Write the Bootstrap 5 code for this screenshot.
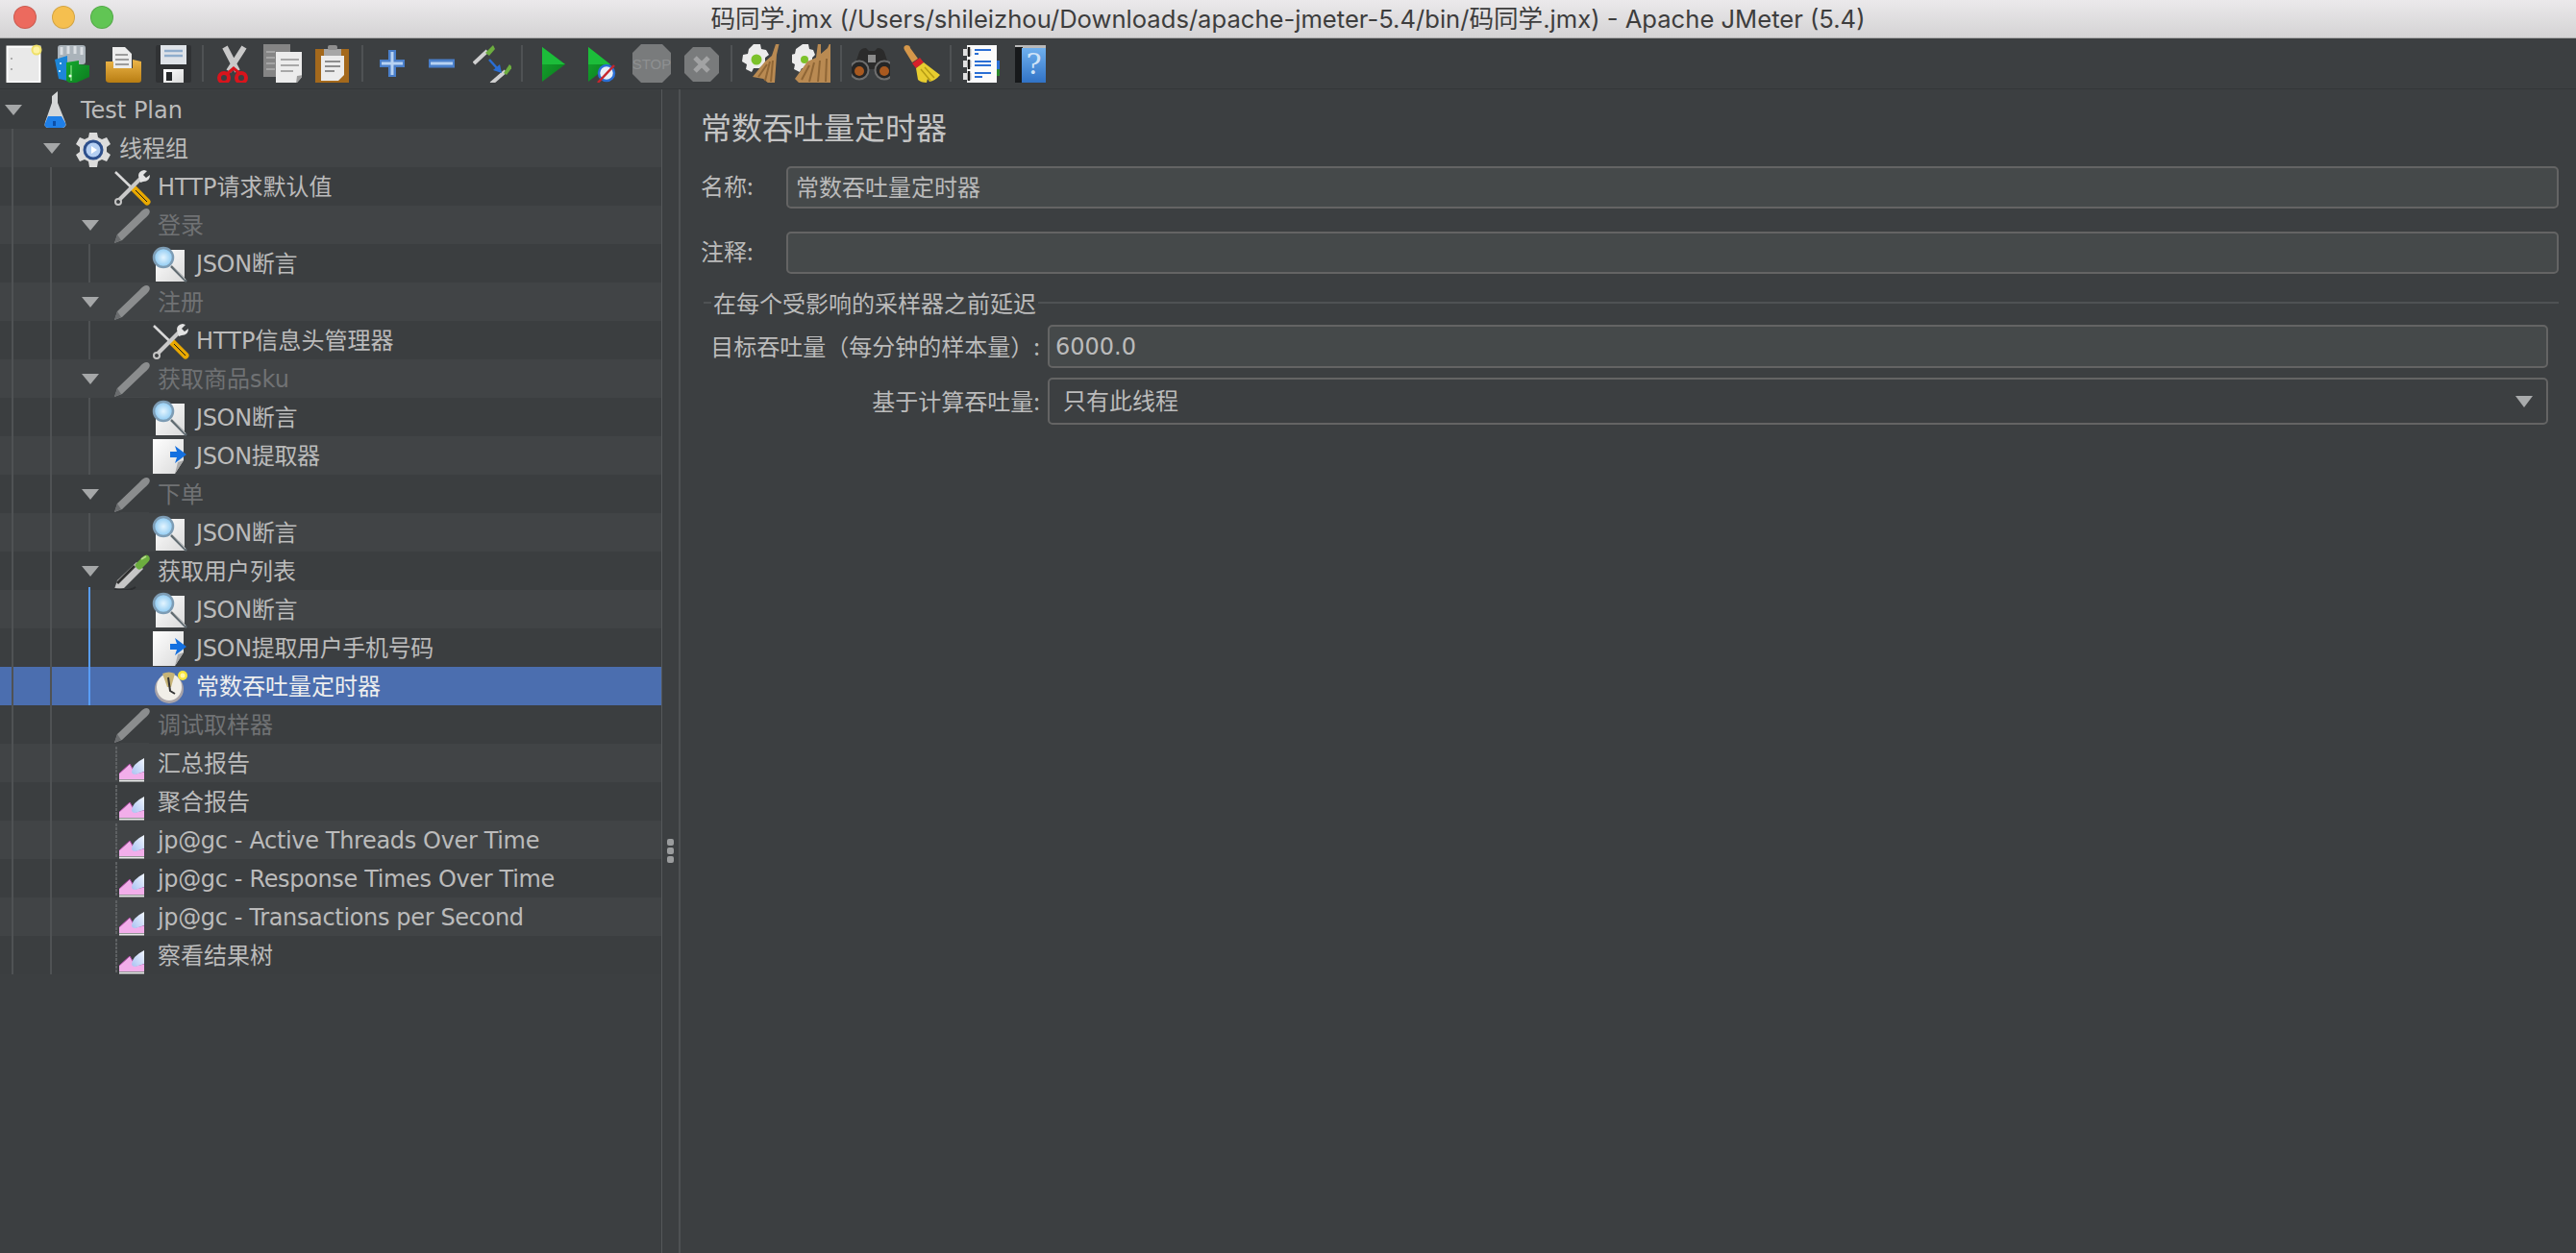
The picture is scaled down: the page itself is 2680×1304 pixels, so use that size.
<!DOCTYPE html>
<html lang="zh-CN">
<head>
    <meta charset="UTF-8">
    <title>码同学.jmx - Apache JMeter (5.4)</title>
    <link rel="stylesheet" href="https://cdn.jsdelivr.net/npm/bootstrap@5.3.0/dist/css/bootstrap.min.css">
    <style>
        html, body { height: 100%; }
        body { background: #3c3f41; color: #bbb; overflow: hidden; font: 24px/1.2 "DejaVu Sans", "Noto Sans CJK SC", sans-serif; }
        .app-shell { height: 1304px; }

        .title-bar { height: 40px; flex: none; background: linear-gradient(#ebe9eb, #d4d3d4); border-bottom: 1px solid #a9a9a9; }
        .title-text { font: 25.6px/38px Inter, "Noto Sans CJK SC", sans-serif; color: #3d3d3d; white-space: nowrap; }
        .light { width: 24px; height: 24px; border-radius: 50%; border: 1px solid rgba(0,0,0,.14); }
        .light-red { background: #ec6a5e; }
        .light-amber { background: #f5bf4f; }
        .light-green { background: #61c554; }
        .lights { left: 14px; top: 6px; gap: 16px; }

        .tool-bar { height: 53px; flex: none; background: #3c3f41; border-bottom: 1px solid #333638; }
        .tool-slot { width: 52px; height: 52px; flex: none; }
        .tool-slot-first { width: 50px; }
        .tool-slot svg { width: 40px; height: 40px; overflow: visible; }
        .tool-sep { width: 10px; flex: none; }
        .tool-sep::after { content: ""; width: 2px; height: 38px; background: #4f5254; }

        .tree-pane { width: 689px; flex: none; padding-top: 1px; border-right: 1px solid #55585a; }
        .split-bar { width: 19px; flex: none; border-right: 2px solid #4e5153; }
        .split-dot { width: 7px; height: 7px; border-radius: 2px; background: #9a9c9d; }
        .split-dots { gap: 2px; margin-top: 780px; }

        .tree-row { height: 40px; background: #3b3e40; white-space: nowrap; }
        .tree-row:nth-child(even) { background: #414446; }
        .tree-row.is-selected { background: #4b6eaf; color: #eee; }
        .tree-row.is-off { color: #707274; }
        .row-text { padding-top: 2px; }
        .latin-tight { letter-spacing: -.35px; }
        .lv1 { padding-left: 40px; }
        .lv2 { padding-left: 80px; }
        .lv3 { padding-left: 120px; }
        .arrow-slot { width: 37px; flex: none; }
        .arrow-down { width: 0; height: 0; margin-left: 5px; border-left: 9px solid transparent; border-right: 9px solid transparent; border-top: 11px solid #a5a7a8; }
        .row-icon { width: 40px; height: 40px; flex: none; margin-right: 7px; overflow: visible; }

        .guide { position: absolute; width: 2px; background: #4f5254; }
        .guide-root { left: 12px; top: 41px; height: 880px; }
        .guide-group { left: 52px; top: 81px; height: 840px; }
        .guide-a { left: 92px; top: 161px; height: 40px; }
        .guide-b { left: 92px; top: 241px; height: 40px; }
        .guide-c { left: 92px; top: 321px; height: 80px; }
        .guide-d { left: 92px; top: 441px; height: 40px; }
        .guide-e { left: 92px; top: 518px; height: 123px; background: #589df6; }

        .detail-pane { padding: 18px 18px 0 21px; }
        .detail-head { font-size: 32px; line-height: 40px; font-family: "Noto Sans CJK SC", sans-serif; color: #c4c4c4; }
        .name-label { width: 89px; flex: none; padding-bottom: 3px; font-family: "Noto Sans CJK SC", sans-serif; }
        .field { height: 44px; padding: 0 8px 3px; font-size: 24px; color: #bbb; background: #45494a; border: 2px solid #646464; border-radius: 5px; font-family: "Noto Sans CJK SC", sans-serif; }
        .field:focus { color: #bbb; background: #45494a; border-color: #646464; box-shadow: none; }
        .field-tall { height: 45px; padding: 0 6px 0 6px; font-family: "DejaVu Sans", sans-serif; }
        .pick { height: 49px; padding: 0 40px 3px 14px; font-size: 24px; color: #bbb; border: 2px solid #646464; border-radius: 5px; font-family: "Noto Sans CJK SC", sans-serif;
            background-color: #3c3f41; background-size: 18px 12px; background-position: right 14px center;
            background-image: url("data:image/svg+xml,%3Csvg xmlns='http://www.w3.org/2000/svg' viewBox='0 0 18 12'%3E%3Cpath d='M0 0h18L9 12z' fill='%23a9abac'/%3E%3C/svg%3E"); }
        .pick:focus { color: #bbb; border-color: #646464; box-shadow: none; }
        .row-one { margin-top: 22px; }
        .row-two { margin-top: 24px; }
        .group-title { height: 30px; margin: 15px 0 0 3px; font-family: "Noto Sans CJK SC", sans-serif; }
        .rule-short { width: 8px; height: 2px; background: #4f5254; margin-right: 2px; }
        .rule-long { height: 2px; background: #4f5254; margin-left: 2px; }
        .group-body { margin: 8px 11px 0 0; }
        .pick-row { margin-top: 10px; }
        .wide-label { width: 361px; flex: none; padding-right: 8px; text-align: right; white-space: nowrap; font-family: "Noto Sans CJK SC", sans-serif; }
    </style>
</head>
<body>
<svg width="0" height="0" class="position-absolute">
    <defs>
        <linearGradient id="paper" x1="0" y1="0" x2="1" y2="1"><stop offset="0" stop-color="#fff"/><stop offset="1" stop-color="#d9d9d9"/></linearGradient>
        <linearGradient id="amber" x1="0" y1="0" x2="0" y2="1"><stop offset="0" stop-color="#edb64a"/><stop offset="1" stop-color="#b87d12"/></linearGradient>
        <linearGradient id="leaf" x1="0" y1="0" x2="1" y2="1"><stop offset="0" stop-color="#14a82e"/><stop offset="1" stop-color="#0c7a1e"/></linearGradient>
        <linearGradient id="sky" x1="0" y1="0" x2="0" y2="1"><stop offset="0" stop-color="#6fb0ee"/><stop offset="1" stop-color="#2d6fc4"/></linearGradient>
        <linearGradient id="ice" x1="1" y1="0" x2="0" y2="1"><stop offset="0" stop-color="#f2f6ff"/><stop offset="1" stop-color="#a9c2f2"/></linearGradient>
        <radialGradient id="lens"><stop offset="0" stop-color="#e4f5ff"/><stop offset="1" stop-color="#8cc9f2"/></radialGradient>

        <symbol id="i-flask" viewBox="0 0 40 40"><path d="M17 6l6-5v12l8 20q2 6-4 6H14q-6 0-4-6l7-20z" fill="#d5d7d8"/><path d="M13 27h14l4 7q1 5-4 5H14q-6 0-4-5z" fill="#1f7fe8"/><path d="M18 32h3v5h-3z" fill="#0c4fa8"/></symbol>
        <symbol id="i-gear" viewBox="0 0 40 40"><path d="M16 4h8l1 5 4 2 5-2 4 7-4 3v5l4 3-4 7-5-2-4 2-1 6h-8l-1-6-4-2-5 2-4-7 4-3v-5l-4-3 4-7 5 2 4-2z" fill="#dcdcdc"/><circle cx="20" cy="22" r="10.5" fill="#2d4f8c"/><circle cx="20" cy="22" r="7.5" fill="#b5cff2"/><path d="M18 18l6 4-6 4z" fill="#fff"/></symbol>
        <symbol id="i-tools" viewBox="0 0 40 40"><path d="M3 5l30 29" stroke="#d9d9d9" stroke-width="2.5"/><path d="M22 22l14 14" stroke="#e8a800" stroke-width="7" stroke-linecap="round"/><path d="M24 24l12 12" stroke="#1b1b1b" stroke-width="1"/><path d="M32 9L7 34" stroke="#c9c9c9" stroke-width="4"/><circle cx="6" cy="36" r="3" fill="none" stroke="#c4c4c4" stroke-width="2"/><path d="M27 9q0-5 6-6l3 1-4 4 3 3 4-3q0 7-7 7l-3 1z" fill="#e3e3e3"/></symbol>
        <symbol id="i-pipe-off" viewBox="0 0 40 40"><path d="M2 39l3-9L28 8q6-7 10-4 3 4-5 10L10 36z" fill="#8b8d8e"/><path d="M2 39l7-3-4-6z" fill="#6a6c6e"/><path d="M8 40h30" stroke="#484b4d" stroke-width="1"/></symbol>
        <symbol id="i-pipe-on" viewBox="0 0 40 40"><path d="M2 39l3-9 20-19 7 7-20 20z" fill="#c6c6c6"/><path d="M5 33L23 15" stroke="#2f2f2f" stroke-width="3"/><path d="M25 17q-3-3 0-5l7-7q4-3 6 0 2 3-1 6l-7 7q-3 2-5-1z" fill="#6cad3f"/><path d="M30 8l5-3" stroke="#b5dd8a" stroke-width="2"/><path d="M2 39q15 3 22-2" stroke="#2b2d2f" stroke-width="2" fill="none"/></symbol>
        <symbol id="i-lens" viewBox="0 0 40 40"><rect x="5" y="6" width="30" height="33" fill="url(#paper)"/><path d="M21 23l16 16" stroke="#5f6a70" stroke-width="2.5"/><path d="M22 22l14 15" stroke="#c9c9c9" stroke-width="1"/><circle cx="13" cy="14" r="10" fill="url(#lens)" stroke="#7d9cb4" stroke-width="2.5"/></symbol>
        <symbol id="i-extract" viewBox="0 0 40 40"><path d="M2 3h32v22l-9 14H2z" fill="url(#paper)"/><path d="M25 39l3-12 6-2z" fill="#a9a9a9"/><path d="M20 16h7l-2-6 12 9-12 9 2-6h-7z" fill="#1470e0"/></symbol>
        <symbol id="i-timer" viewBox="0 0 40 40"><ellipse cx="19" cy="23" rx="15" ry="15" fill="#a9a4a8"/><ellipse cx="19" cy="21" rx="13" ry="14" fill="#f1efe8"/><path d="M12 7q7-3 13 0l-4 14h-4z" fill="#c7b476"/><path d="M18 11l2 14 5 3" stroke="#333" stroke-width="2" fill="none"/><circle cx="33" cy="9" r="5" fill="#f5e33c"/><circle cx="33" cy="9" r="2.5" fill="#fff7a8"/></symbol>
        <symbol id="i-chart" viewBox="0 0 40 40"><path d="M4 3v36" stroke="#5d6062" stroke-width="2" stroke-dasharray="3 1"/><path d="M7 37v-6l11-10 6 10 9-2v8z" fill="#f2aeea"/><path d="M7 31l11-10 6 10 9-2" stroke="#b04ca8" stroke-width="1" fill="none"/><path d="M33 15q-12 6-13 14 0 3 4 3l9-3z" fill="url(#ice)"/><path d="M7 38.500h26" stroke="#e9e9e9" stroke-width="2"/></symbol>

        <symbol id="t-new" viewBox="0 0 40 40"><rect x="2.500" y="2.500" width="34" height="37" fill="#e9e9e9" stroke="#fff" stroke-width="2"/><circle cx="33" cy="6" r="4.500" fill="#fdf3a3" stroke="#efe06a" stroke-width="2"/><circle cx="7" cy="15" r="1" fill="#999"/><circle cx="7" cy="26" r="1" fill="#999"/></symbol>
        <symbol id="t-template" viewBox="0 0 40 40"><rect x="4" y="1" width="29" height="20" rx="3" fill="#aab3ba"/><path d="M8 3v8M15 2v8M22 2v8M29 3v8" stroke="#d9dee2" stroke-width="3"/><path d="M1 16l13-4v26L5 36z" fill="#1d86d8"/><path d="M6 20l2 0M5 28l2 0" stroke="#bfe4ff" stroke-width="2"/><path d="M13 19l13-2v4l11 1v12L19 42l-6-4z" fill="url(#leaf)"/><path d="M18 22v16" stroke="#58c85f" stroke-width="2"/><circle cx="17" cy="33" r="1.500" fill="#e6ffe6"/></symbol>
        <symbol id="t-open" viewBox="0 0 40 40"><path d="M9 3h13l7 7v16H9z" fill="#ececec"/><path d="M12 11h13M12 16h14M12 21h14" stroke="#9c9c9c" stroke-width="2"/><path d="M2 18h8v7h20v-9l9 2v19q0 3-3 3H6q-4 0-4-3z" fill="url(#amber)"/></symbol>
        <symbol id="t-save" viewBox="0 0 40 40"><path d="M3 1h34q2 0 2 2v35q0 2-2 2H4q-2 0-2-2V3z" fill="#303234"/><rect x="7" y="1" width="27" height="20" fill="#dfe3e8"/><path d="M11 7h19M11 12h19" stroke="#8fadcc" stroke-width="2.500"/><rect x="10" y="26" width="21" height="14" fill="url(#paper)"/><rect x="13" y="29" width="6" height="9" fill="#26282a"/></symbol>
        <symbol id="t-cut" viewBox="0 0 40 40"><path d="M12 3l13 25M32 3L16 28" stroke="#c9c9c9" stroke-width="6"/><circle cx="11" cy="35" r="5" fill="none" stroke="#d8141c" stroke-width="4"/><circle cx="29" cy="35" r="5" fill="none" stroke="#d8141c" stroke-width="4"/><path d="M14 31l7-6 7 6" stroke="#d8141c" stroke-width="3" fill="none"/></symbol>
        <symbol id="t-copy" viewBox="0 0 40 40"><rect x="-1" y="0" width="29" height="34" fill="#858585"/><path d="M3 8h9M3 14h9M3 20h9M3 26h9" stroke="#a5a5a5" stroke-width="2"/><path d="M13 8h29v24l-8 9H13z" fill="#ececec"/><path d="M18 16h19M18 22h19M18 28h13" stroke="#a8a8a8" stroke-width="2"/><path d="M34 41l1-8 7-1z" fill="#9c9c9c"/></symbol>
        <symbol id="t-paste" viewBox="0 0 40 40"><rect x="2" y="5" width="35" height="36" fill="#a4691c"/><path d="M8 12h24v20l-6 6H8z" fill="#ececec"/><path d="M12 18h16M12 23h16M12 28h10" stroke="#8d8d8d" stroke-width="2"/><rect x="11" y="5" width="18" height="7" fill="#a7a7a7"/><rect x="15" y="1" width="10" height="5" rx="2" fill="#8f8f8f"/></symbol>
        <symbol id="t-plus" viewBox="0 0 40 40"><path d="M20 6v28M7 20h26" stroke="#4a7fca" stroke-width="8"/><path d="M20 8v24M9 20h22" stroke="#b7d2f2" stroke-width="3"/></symbol>
        <symbol id="t-minus" viewBox="0 0 40 40"><path d="M6 20h27" stroke="#4a7fca" stroke-width="9"/><path d="M8 20h23" stroke="#b7d2f2" stroke-width="3"/></symbol>
        <symbol id="t-toggle" viewBox="0 0 40 40"><path d="M1 20L15 7" stroke="#d0d0d0" stroke-width="4"/><path d="M13 9l8-8 2 4-6 7z" fill="#6cad3f"/><path d="M19 41l15-13" stroke="#d0d0d0" stroke-width="4"/><path d="M32 30l6-9 3 3-6 8z" fill="#6cad3f"/><path d="M17 16l9 10" stroke="#2a6ed4" stroke-width="2.500"/><path d="M30 30l-9-3 7-6z" fill="#2a6ed4"/></symbol>
        <symbol id="t-play" viewBox="0 0 40 40"><path d="M10 3l24 18-24 18z" fill="url(#leaf)"/><path d="M10 3l24 18H10z" fill="#1cbd3a"/></symbol>
        <symbol id="t-play-no" viewBox="0 0 40 40"><path d="M6 3l23 18L6 39z" fill="url(#leaf)"/><path d="M6 3l23 18H6z" fill="#1cbd3a"/><circle cx="25" cy="30" r="8" fill="#e8eef8" stroke="#2a6ed4" stroke-width="2.500"/><path d="M16 40l17-18" stroke="#c6262e" stroke-width="2.500"/></symbol>
        <symbol id="t-stop" viewBox="0 0 40 40"><path d="M11-2h18l13 13v18L29 42H11L-2 29V11z" fill="#797b7c"/><text x="20" y="26" text-anchor="middle" font-family="Liberation Sans, sans-serif" font-size="15" fill="#8e9091">STOP</text></symbol>
        <symbol id="t-halt" viewBox="0 0 40 40"><path d="M11 3h18l9 9v18l-9 9H11l-9-9V12z" fill="#797b7c"/><path d="M13 14l14 14M27 14L13 28" stroke="#a2a3a4" stroke-width="5"/></symbol>
        <symbol id="t-clear" viewBox="0 0 40 40"><path d="M12 0h7l1 5 5 1 3 5-4 3v6l-6 5h-6l-2 4-6-3 1-5-5-3 1-7 5-1 1-5z" fill="#ececec"/><circle cx="15" cy="16" r="5.500" fill="#7cc22b"/><path d="M11 34l13-16 7-6 5-15 3 1-3 13-2 29-6 1-6-5z" fill="#b98a52"/><path d="M17 34l9-13M24 38l5-20M30 39l2-22" stroke="#8f6636" stroke-width="2"/></symbol>
        <symbol id="t-clear-all" viewBox="0 0 40 40"><path d="M11 0h6l1 5 4 1 2 5-3 3v6l-5 5h-6l-2 4-6-3 1-5-5-3 1-7 4-1 1-5z" fill="#ececec"/><circle cx="13" cy="16" r="4" fill="#7cc22b"/><path d="M3 36l13-18 9-4 2-15 3 1 0 10 7-6 3-7 2 1-2 14 0 28-32 1z" fill="#b98a52"/><path d="M10 37l8-15M18 39l5-20M27 39l2-22M35 39l1-24" stroke="#8f6636" stroke-width="2"/></symbol>
        <symbol id="t-find" viewBox="0 0 40 40"><path d="M8 8q2-4 7-4l3 3h6l3-3q5 0 7 4l6 18H2z" fill="#2b2b2b"/><path d="M17 11h8v8h-8z" fill="#8c8c8c"/><circle cx="8" cy="27" r="9.500" fill="#262626" stroke="#6f6f6f" stroke-width="2"/><circle cx="34" cy="27" r="9.500" fill="#262626" stroke="#6f6f6f" stroke-width="2"/><circle cx="8" cy="28" r="5" fill="#a9591f"/><circle cx="34" cy="28" r="5" fill="#a9591f"/></symbol>
        <symbol id="t-broom" viewBox="0 0 40 40"><path d="M3 6q-2-4 2-5 4 0 4 3l8 11-6 4z" fill="#d5974a"/><path d="M11 20l8-6 4 5-8 6z" fill="#d7202a"/><path d="M15 25l8-6 17 13q-5 6-11 7l-2-3-1 4q-6 0-9-3z" fill="#e8cd2f"/><path d="M20 26l10 12M24 24l10 11" stroke="#b69c15" stroke-width="1.500"/></symbol>
        <symbol id="t-log" viewBox="0 0 40 40"><rect x="35" y="17" width="6" height="9" fill="#2a6ed4"/><rect x="35" y="26" width="6" height="7" fill="#2d8a2d"/><rect x="6" y="1" width="31" height="40" fill="#fbfbfb"/><path d="M14 6h17M14 10h4M14 18h17M14 22h17M14 30h17M14 34h8" stroke="#2a6ed4" stroke-width="2.200"/><path d="M2 5h9v7H2zM2 17h9v7H2zM2 30h9v7H2z" fill="#e1e1e1"/><path d="M8 3v10M8 16v10M8 28v10" stroke="#1b1b1b" stroke-width="2.500"/></symbol>
        <symbol id="t-help" viewBox="0 0 40 40"><rect x="4" y="1" width="32" height="3" fill="#b9b9b9"/><rect x="4" y="3" width="8" height="39" fill="#17191b"/><rect x="11" y="4" width="25" height="38" fill="url(#sky)"/><text x="23.500" y="31" text-anchor="middle" font-family="DejaVu Serif, serif" font-size="30" fill="#cfe3f7">?</text></symbol>
    </defs>
</svg>

<div class="app-shell d-flex flex-column">
    <div class="title-bar d-flex align-items-center justify-content-center position-relative">
        <div class="lights d-flex position-absolute">
            <span class="light light-red"></span>
            <span class="light light-amber"></span>
            <span class="light light-green"></span>
        </div>
        <span class="title-text">码同学.jmx (/Users/shileizhou/Downloads/apache-jmeter-5.4/bin/码同学.jmx) - Apache JMeter (5.4)</span>
    </div>

    <div class="tool-bar d-flex">
        <div class="tool-slot tool-slot-first d-flex align-items-center justify-content-center"><svg><use href="#t-new"/></svg></div>
        <div class="tool-slot d-flex align-items-center justify-content-center"><svg><use href="#t-template"/></svg></div>
        <div class="tool-slot d-flex align-items-center justify-content-center"><svg><use href="#t-open"/></svg></div>
        <div class="tool-slot d-flex align-items-center justify-content-center"><svg><use href="#t-save"/></svg></div>
        <div class="tool-sep d-flex align-items-center justify-content-center"></div>
        <div class="tool-slot d-flex align-items-center justify-content-center"><svg><use href="#t-cut"/></svg></div>
        <div class="tool-slot d-flex align-items-center justify-content-center"><svg><use href="#t-copy"/></svg></div>
        <div class="tool-slot d-flex align-items-center justify-content-center"><svg><use href="#t-paste"/></svg></div>
        <div class="tool-sep d-flex align-items-center justify-content-center"></div>
        <div class="tool-slot d-flex align-items-center justify-content-center"><svg><use href="#t-plus"/></svg></div>
        <div class="tool-slot d-flex align-items-center justify-content-center"><svg><use href="#t-minus"/></svg></div>
        <div class="tool-slot d-flex align-items-center justify-content-center"><svg><use href="#t-toggle"/></svg></div>
        <div class="tool-sep d-flex align-items-center justify-content-center"></div>
        <div class="tool-slot d-flex align-items-center justify-content-center"><svg><use href="#t-play"/></svg></div>
        <div class="tool-slot d-flex align-items-center justify-content-center"><svg><use href="#t-play-no"/></svg></div>
        <div class="tool-slot d-flex align-items-center justify-content-center"><svg><use href="#t-stop"/></svg></div>
        <div class="tool-slot d-flex align-items-center justify-content-center"><svg><use href="#t-halt"/></svg></div>
        <div class="tool-sep d-flex align-items-center justify-content-center"></div>
        <div class="tool-slot d-flex align-items-center justify-content-center"><svg><use href="#t-clear"/></svg></div>
        <div class="tool-slot d-flex align-items-center justify-content-center"><svg><use href="#t-clear-all"/></svg></div>
        <div class="tool-sep d-flex align-items-center justify-content-center"></div>
        <div class="tool-slot d-flex align-items-center justify-content-center"><svg><use href="#t-find"/></svg></div>
        <div class="tool-slot d-flex align-items-center justify-content-center"><svg><use href="#t-broom"/></svg></div>
        <div class="tool-sep d-flex align-items-center justify-content-center"></div>
        <div class="tool-slot d-flex align-items-center justify-content-center"><svg><use href="#t-log"/></svg></div>
        <div class="tool-slot d-flex align-items-center justify-content-center"><svg><use href="#t-help"/></svg></div>
    </div>

    <div class="d-flex flex-grow-1">
        <div class="tree-pane position-relative">
            <ul class="list-unstyled mb-0">
                <li class="tree-row d-flex align-items-center"><span class="arrow-slot"><span class="arrow-down d-block"></span></span><svg class="row-icon"><use href="#i-flask"/></svg><span class="row-text">Test Plan</span></li>
                <li class="tree-row lv1 d-flex align-items-center"><span class="arrow-slot"><span class="arrow-down d-block"></span></span><svg class="row-icon"><use href="#i-gear"/></svg><span class="row-text">线程组</span></li>
                <li class="tree-row lv2 d-flex align-items-center"><span class="arrow-slot"></span><svg class="row-icon"><use href="#i-tools"/></svg><span class="row-text">HTTP请求默认值</span></li>
                <li class="tree-row lv2 is-off d-flex align-items-center"><span class="arrow-slot"><span class="arrow-down d-block"></span></span><svg class="row-icon"><use href="#i-pipe-off"/></svg><span class="row-text">登录</span></li>
                <li class="tree-row lv3 d-flex align-items-center"><span class="arrow-slot"></span><svg class="row-icon"><use href="#i-lens"/></svg><span class="row-text latin-tight">JSON断言</span></li>
                <li class="tree-row lv2 is-off d-flex align-items-center"><span class="arrow-slot"><span class="arrow-down d-block"></span></span><svg class="row-icon"><use href="#i-pipe-off"/></svg><span class="row-text">注册</span></li>
                <li class="tree-row lv3 d-flex align-items-center"><span class="arrow-slot"></span><svg class="row-icon"><use href="#i-tools"/></svg><span class="row-text">HTTP信息头管理器</span></li>
                <li class="tree-row lv2 is-off d-flex align-items-center"><span class="arrow-slot"><span class="arrow-down d-block"></span></span><svg class="row-icon"><use href="#i-pipe-off"/></svg><span class="row-text">获取商品sku</span></li>
                <li class="tree-row lv3 d-flex align-items-center"><span class="arrow-slot"></span><svg class="row-icon"><use href="#i-lens"/></svg><span class="row-text latin-tight">JSON断言</span></li>
                <li class="tree-row lv3 d-flex align-items-center"><span class="arrow-slot"></span><svg class="row-icon"><use href="#i-extract"/></svg><span class="row-text latin-tight">JSON提取器</span></li>
                <li class="tree-row lv2 is-off d-flex align-items-center"><span class="arrow-slot"><span class="arrow-down d-block"></span></span><svg class="row-icon"><use href="#i-pipe-off"/></svg><span class="row-text">下单</span></li>
                <li class="tree-row lv3 d-flex align-items-center"><span class="arrow-slot"></span><svg class="row-icon"><use href="#i-lens"/></svg><span class="row-text latin-tight">JSON断言</span></li>
                <li class="tree-row lv2 d-flex align-items-center"><span class="arrow-slot"><span class="arrow-down d-block"></span></span><svg class="row-icon"><use href="#i-pipe-on"/></svg><span class="row-text">获取用户列表</span></li>
                <li class="tree-row lv3 d-flex align-items-center"><span class="arrow-slot"></span><svg class="row-icon"><use href="#i-lens"/></svg><span class="row-text latin-tight">JSON断言</span></li>
                <li class="tree-row lv3 d-flex align-items-center"><span class="arrow-slot"></span><svg class="row-icon"><use href="#i-extract"/></svg><span class="row-text latin-tight">JSON提取用户手机号码</span></li>
                <li class="tree-row lv3 is-selected d-flex align-items-center"><span class="arrow-slot"></span><svg class="row-icon"><use href="#i-timer"/></svg><span class="row-text">常数吞吐量定时器</span></li>
                <li class="tree-row lv2 is-off d-flex align-items-center"><span class="arrow-slot"></span><svg class="row-icon"><use href="#i-pipe-off"/></svg><span class="row-text">调试取样器</span></li>
                <li class="tree-row lv2 d-flex align-items-center"><span class="arrow-slot"></span><svg class="row-icon"><use href="#i-chart"/></svg><span class="row-text">汇总报告</span></li>
                <li class="tree-row lv2 d-flex align-items-center"><span class="arrow-slot"></span><svg class="row-icon"><use href="#i-chart"/></svg><span class="row-text">聚合报告</span></li>
                <li class="tree-row lv2 d-flex align-items-center"><span class="arrow-slot"></span><svg class="row-icon"><use href="#i-chart"/></svg><span class="row-text latin-tight">jp@gc - Active Threads Over Time</span></li>
                <li class="tree-row lv2 d-flex align-items-center"><span class="arrow-slot"></span><svg class="row-icon"><use href="#i-chart"/></svg><span class="row-text latin-tight">jp@gc - Response Times Over Time</span></li>
                <li class="tree-row lv2 d-flex align-items-center"><span class="arrow-slot"></span><svg class="row-icon"><use href="#i-chart"/></svg><span class="row-text latin-tight">jp@gc - Transactions per Second</span></li>
                <li class="tree-row lv2 d-flex align-items-center"><span class="arrow-slot"></span><svg class="row-icon"><use href="#i-chart"/></svg><span class="row-text">察看结果树</span></li>
            </ul>
            <span class="guide guide-root"></span>
            <span class="guide guide-group"></span>
            <span class="guide guide-a"></span>
            <span class="guide guide-b"></span>
            <span class="guide guide-c"></span>
            <span class="guide guide-d"></span>
            <span class="guide guide-e"></span>
        </div>

        <div class="split-bar d-flex justify-content-center">
            <div class="split-dots d-flex flex-column">
                <span class="split-dot"></span>
                <span class="split-dot"></span>
                <span class="split-dot"></span>
            </div>
        </div>

        <div class="detail-pane flex-grow-1">
            <div class="detail-head">常数吞吐量定时器</div>
            <div class="row-one d-flex align-items-center">
                <label class="name-label">名称:</label>
                <input class="form-control field" type="text" value="常数吞吐量定时器">
            </div>
            <div class="row-two d-flex align-items-center">
                <label class="name-label">注释:</label>
                <input class="form-control field" type="text">
            </div>
            <div class="group-title d-flex align-items-center">
                <span class="rule-short"></span>
                <span>在每个受影响的采样器之前延迟</span>
                <span class="rule-long flex-grow-1"></span>
            </div>
            <div class="group-body">
                <div class="d-flex align-items-center">
                    <label class="wide-label">目标吞吐量（每分钟的样本量）:</label>
                    <input class="form-control field field-tall" type="text" value="6000.0">
                </div>
                <div class="pick-row d-flex align-items-center">
                    <label class="wide-label">基于计算吞吐量:</label>
                    <select class="form-select pick"><option>只有此线程</option></select>
                </div>
            </div>
        </div>
    </div>
</div>
<script src="https://cdn.jsdelivr.net/npm/bootstrap@5.3.0/dist/js/bootstrap.bundle.min.js"></script>
</body>
</html>
